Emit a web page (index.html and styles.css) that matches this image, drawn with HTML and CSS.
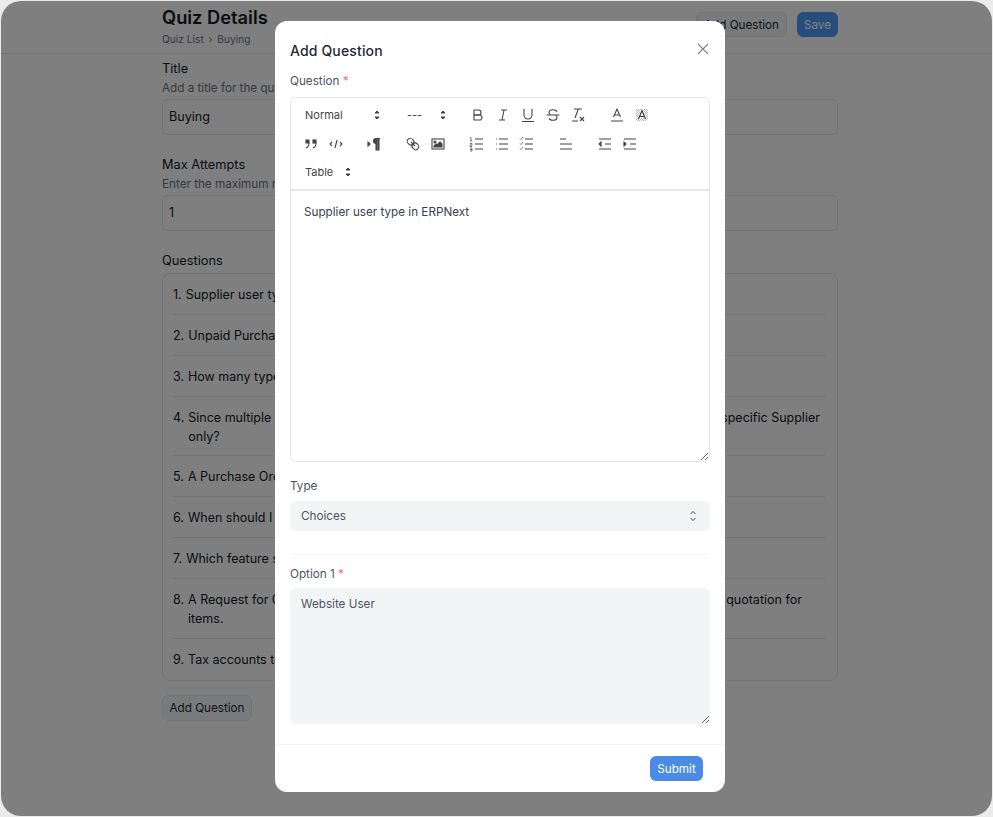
FILE: index.html
```html
<!DOCTYPE html>
<html lang="en">
<head>
    <meta charset="UTF-8">
    <meta name="viewport" content="width=device-width, initial-scale=1.0">
    <title>Quiz Details</title>
    <link rel="stylesheet" href="styles.css">
</head>
<body>

<div class="window">
    <header class="page-header">
        <div class="page-header-inner">
            <div>
                <h1 class="page-title">Quiz Details</h1>
                <div class="crumbs">Quiz List <span class="crumb-sep">›</span> Buying</div>
            </div>
            <div class="header-actions">
                <button class="btn">Add Question</button>
                <button class="btn btn-primary">Save</button>
            </div>
        </div>
    </header>

    <main class="page-body">
        <div class="field-title">Title</div>
        <div class="field-desc">Add a title for the quiz</div>
        <div class="page-input">Buying</div>

        <div class="field-title field-gap">Max Attempts</div>
        <div class="field-desc">Enter the maximum number of attempts allowed</div>
        <div class="page-input">1</div>

        <div class="field-title questions-title">Questions</div>
        <ol class="question-list">
            <li><span class="q-num">1.</span><span>Supplier user type in ERPNext</span></li>
            <li><span class="q-num">2.</span><span>Unpaid Purchase Invoices can be tracked from which report?</span></li>
            <li><span class="q-num">3.</span><span>How many types of Purchase Order status are available?</span></li>
            <li><span class="q-num">4.</span><span>Since multiple Suppliers can be linked to a singular Item, how can you restrict an Item to a specific Supplier only?</span></li>
            <li><span class="q-num">5.</span><span>A Purchase Order can be created from which documents?</span></li>
            <li><span class="q-num">6.</span><span>When should I use a Purchase Receipt for received items?</span></li>
            <li><span class="q-num">7.</span><span>Which feature should be used to compare supplier rates?</span></li>
            <li><span class="q-num">8.</span><span>A Request for Quotation can be sent to multiple Suppliers over email to receive their fairest quotation for items.</span></li>
            <li><span class="q-num">9.</span><span>Tax accounts to be added in which template?</span></li>
        </ol>
        <button class="btn add-bottom">Add Question</button>
    </main>

    <div class="overlay"></div>

    <div class="modal">
        <div class="modal-head">
            <h2 class="modal-title">Add Question</h2>
            <svg class="close-icon" width="12" height="12" viewBox="0 0 12 12"><path d="M1 1l10 10M11 1L1 11"/></svg>
        </div>

        <label class="label">Question <span class="req">*</span></label>
        <div class="editor">
            <div class="toolbar">
                <div class="tb-row">
                    <div class="picker picker-wide">Normal
                        <svg viewBox="0 0 18 18"><polygon points="7 11 9 13 11 11 7 11"/><polygon points="7 7 9 5 11 7 7 7"/></svg>
                    </div>
                    <div class="picker picker-mid">---
                        <svg viewBox="0 0 18 18"><polygon points="7 11 9 13 11 11 7 11"/><polygon points="7 7 9 5 11 7 7 7"/></svg>
                    </div>
                    <div class="tb-group">
                        <svg class="tb-icon" viewBox="0 0 18 18"><path d="M5,4H9.5A2.5,2.5,0,0,1,12,6.5v0A2.5,2.5,0,0,1,9.5,9H5V4Z"/><path d="M5,9h5.5A2.5,2.5,0,0,1,13,11.5v0A2.5,2.5,0,0,1,10.5,14H5V9Z"/></svg>
                        <svg class="tb-icon" viewBox="0 0 18 18"><path d="M7 4h6M5 14h6M8 14l2-10"/></svg>
                        <svg class="tb-icon" viewBox="0 0 18 18"><path d="M5,3V9a4,4,0,0,0,4,4h0a4,4,0,0,0,4-4V3"/><path d="M3 15.500h12"/></svg>
                        <svg class="tb-icon" viewBox="0 0 18 18"><path d="M2.500 9h13"/><path d="M13 5.700C12.500 4.400 10.900 3.700 9 3.700c-2.400 0-4 1.200-4 2.800 0 1 .5 1.700 1.400 2.200"/><path d="M5 12.300c.5 1.300 2.100 2 4 2 2.400 0 4-1.200 4-2.800 0-1-.5-1.700-1.400-2.200"/></svg>
                        <svg class="tb-icon" viewBox="0 0 18 18"><path d="M5 3h8M6 12l3.300-9M11 11l4 4M15 11l-4 4M3 15h6"/></svg>
                    </div>
                    <div class="tb-group">
                        <svg class="tb-icon" viewBox="0 0 18 18"><path d="M3 15h12M5.500 11L9 3l3.500 8M11.600 9H6.400"/></svg>
                        <svg class="tb-icon" viewBox="0 0 18 18"><g class="hatch"><path d="M3 4l1-1M3 6l3-3M3 8l5-5M3 10l7-7M3 12l9-9M3 14l11-11M4 15L15 4M6 15l9-9M8 15l7-7M10 15l5-5M12 15l3-3"/></g><path class="a-halo" d="M5.500 13L9 4.500 12.500 13M11.600 10.500H6.400"/><path class="a-mark" d="M5.500 13L9 4.500 12.500 13M11.600 10.500H6.400"/></svg>
                    </div>
                </div>
                <div class="tb-row">
                    <div class="tb-group tb-first">
                        <svg class="tb-icon" viewBox="0 0 18 18"><rect class="solid" height="3" width="3" x="4" y="5"/><rect class="solid" height="3" width="3" x="11" y="5"/><path d="M7,8c0,4-3,5-3,5"/><path d="M14,8c0,4-3,5-3,5"/></svg>
                        <svg class="tb-icon" viewBox="0 0 18 18"><path d="M5 7L3 9l2 2M13 7l2 2-2 2M10 5L8 13"/></svg>
                    </div>
                    <div class="tb-group">
                        <svg class="tb-icon" viewBox="0 0 18 18"><polygon class="solid" points="3 11 5 9 3 7 3 11"/><path class="solid no-line" d="M11,3a3,3,0,0,0,0,6h1V3H11Z"/><rect class="solid" height="11" width="1" x="11" y="4"/><rect class="solid" height="11" width="1" x="13" y="4"/><path d="M11 3.500h4"/></svg>
                    </div>
                    <div class="tb-group">
                        <svg class="tb-icon" viewBox="0 0 18 18"><path d="M7 7l4 4"/><path d="M8.900,4.577a3.476,3.476,0,0,1,.36,4.679A3.476,3.476,0,0,1,4.577,8.900C3.185,7.500,2.035,6.400,4.217,4.217S7.500,3.185,8.900,4.577Z"/><path d="M13.423,9.100a3.476,3.476,0,0,0-4.679-.36,3.476,3.476,0,0,0,.36,4.679c1.392,1.392,2.500,2.542,4.679.36S14.815,10.500,13.423,9.100Z"/></svg>
                        <svg class="tb-icon" viewBox="0 0 18 18"><rect height="10" width="12" x="3" y="4"/><circle class="solid" cx="6" cy="7" r="1"/><polygon class="solid" points="5 12 5 11 7 9 8 10 11 7 13 9 13 12 5 12"/></svg>
                    </div>
                    <div class="tb-group">
                        <svg class="tb-icon" viewBox="0 0 18 18"><path d="M7 4h8M7 9h8M7 14h8"/><path class="thin" d="M2 3l1-.5V6M2 6h2M2 8.500h2v1.500H2v1.500h2M2 13h2v3H2M2 14.500h2"/></svg>
                        <svg class="tb-icon" viewBox="0 0 18 18"><path d="M6 4h9M6 9h9M6 14h9"/><path d="M3 4h.8M3 9h.8M3 14h.8"/></svg>
                        <svg class="tb-icon" viewBox="0 0 18 18"><path d="M7 4h8M7 9h8M7 14h8"/><path class="thin" d="M2 3.500l1 1 2-2.500M2 8.500l1 1 2-2.500M2 13.500l1 1 2-2.500"/></svg>
                    </div>
                    <div class="tb-group tb-tight">
                        <svg class="tb-icon" viewBox="0 0 18 18"><path d="M3 4h6M3 9h12M3 14h12"/></svg>
                    </div>
                    <div class="tb-group">
                        <svg class="tb-icon" viewBox="0 0 18 18"><path d="M3 14h12M3 4h12M9 9h6"/><polygon class="solid" points="5 7 5 11 3 9 5 7"/></svg>
                        <svg class="tb-icon" viewBox="0 0 18 18"><path d="M3 14h12M3 4h12M9 9h6"/><polygon class="solid" points="3 7 3 11 5 9 3 7"/></svg>
                    </div>
                </div>
                <div class="tb-row">
                    <div class="picker picker-table">Table
                        <svg viewBox="0 0 18 18"><polygon points="7 11 9 13 11 11 7 11"/><polygon points="7 7 9 5 11 7 7 7"/></svg>
                    </div>
                </div>
            </div>
            <div class="editor-body">Supplier user type in ERPNext</div>
        </div>

        <label class="label type-label">Type</label>
        <div class="select">Choices
            <svg width="12" height="14" viewBox="0 0 12 14"><path d="M3.500 5L6 2.500 8.500 5M3.500 9L6 11.500 8.500 9"/></svg>
        </div>

        <hr class="divider">

        <label class="label">Option 1 <span class="req">*</span></label>
        <textarea class="textarea">Website User</textarea>

        <div class="modal-foot">
            <button class="btn-submit">Submit</button>
        </div>
    </div>
</div>

</body>
</html>
```

FILE: styles.css
```css
* {
    box-sizing: border-box;
}
body {
    margin: 0;
    background-color: #ebebeb;
    font-family: Inter, 'Noto Sans', sans-serif;
    color: #111827;
}
.window {
    position: relative;
    width: 991px;
    height: 815px;
    margin: 1px;
    background-color: #fff;
    border-radius: 20px;
    overflow: hidden;
}
.overlay {
    position: absolute;
    top: 0;
    left: 0;
    right: 0;
    bottom: 0;
    background-color: rgba(0, 0, 0, 0.5);
}

/* page behind the dialog */
.page-header {
    height: 53px;
    border-bottom: 1px solid #e5e7eb;
}
.page-header-inner {
    width: 676px;
    margin-left: 161px;
    display: flex;
    justify-content: space-between;
    align-items: flex-start;
}
.page-title {
    margin: 5px 0 0;
    font-size: 18.3px;
    line-height: 22px;
    font-weight: 600;
}
.crumbs {
    margin-top: 4px;
    font-size: 10.2px;
    line-height: 14px;
    color: #6b7280;
}
.crumb-sep {
    margin: 0 2px;
}
.header-actions {
    display: flex;
    gap: 10px;
    margin-top: 11px;
}
.btn {
    height: 25px;
    width: 91px;
    padding: 0;
    border: 1px solid #e5e7eb;
    border-radius: 6px;
    background-color: #f3f4f6;
    font-family: inherit;
    font-size: 11.7px;
    color: #1f2937;
}
.btn-primary {
    width: 41px;
    background-color: #4f9bf9;
    border-color: #4f9bf9;
    color: #fff;
}
.page-body {
    width: 676px;
    margin-left: 161px;
    padding-top: 7px;
}
.field-title {
    font-size: 12.8px;
    line-height: 16px;
    font-weight: 400;
}
.field-gap {
    margin-top: 22px;
}
.field-desc {
    margin-top: 3px;
    font-size: 11.7px;
    line-height: 16px;
    color: #6b7280;
}
.page-input {
    height: 36px;
    margin-top: 3px;
    padding: 0 6px;
    border: 1px solid #e5e7eb;
    border-radius: 6px;
    font-size: 12.6px;
    line-height: 33px;
}
.questions-title {
    margin-top: 22px;
}
.question-list {
    margin: 4px 0 0;
    height: 408px;
    padding: 0 12px 0 10px;
    border: 1px solid #e5e7eb;
    border-radius: 8px;
    font-size: 12.5px;
    line-height: 19px;
    list-style: none;
}
.question-list li {
    display: flex;
    padding: 11px 0 10px;
    border-bottom: 1px solid #e5e7eb;
}
.question-list li:nth-child(4) {
    padding-bottom: 9px;
}
.q-num {
    flex: none;
    margin-right: 4px;
}
.question-list li:last-child {
    border-bottom: none;
}
.add-bottom {
    display: block;
    width: 90px;
    height: 26px;
    margin-top: 14px;
}

/* dialog */
.modal {
    position: absolute;
    top: 20px;
    left: 274px;
    width: 450px;
    height: 771px;
    padding: 0 15px;
    background-color: #fff;
    border-radius: 12px;
}
.modal-head {
    display: flex;
    justify-content: space-between;
    align-items: flex-start;
    padding-top: 20px;
    height: 52px;
}
.modal-title {
    margin: 0;
    font-size: 14px;
    line-height: 20px;
    font-weight: 500;
    letter-spacing: 0.15px;
    color: #1f2937;
}
.close-icon {
    margin: 2px 1px 0 0;
    stroke: #7b8290;
    stroke-width: 1.1;
    fill: none;
}
.label {
    display: block;
    font-size: 11.7px;
    line-height: 16px;
    color: #4b5563;
}
.req {
    color: #f87171;
}
.editor {
    height: 365px;
    margin-top: 8px;
    border: 1px solid #e5e7eb;
    border-radius: 6px;
    display: flex;
    flex-direction: column;
}
.toolbar {
    height: 93px;
    padding: 3px 7px 0;
    border-bottom: 2px solid #e5e7eb;
}
.tb-row {
    display: flex;
    height: 28.5px;
    align-items: center;
    gap: 14px;
}
.tb-group {
    display: flex;
    align-items: center;
}
.tb-first {
    margin-right: -1px;
}
.tb-tight {
    margin-right: 0;
}
.tb-icon {
    width: 18px;
    height: 18px;
    margin: 0 3.5px;
    stroke: #444;
    stroke-width: 1.1;
    fill: none;
}
.tb-icon .solid {
    fill: #444;
}
.tb-icon .no-line {
    stroke: none;
}
.tb-icon .thin {
    stroke-width: 0.7;
}
.tb-icon .hatch {
    stroke: #888;
    stroke-width: 0.6;
}
.tb-icon .a-halo {
    stroke: #fff;
    stroke-width: 2.6;
}
.tb-icon .a-mark {
    stroke: #333;
}
.picker {
    display: flex;
    justify-content: space-between;
    align-items: center;
    height: 24px;
    padding-left: 7px;
    font-size: 11px;
    color: #444;
}
.picker svg {
    width: 18px;
    height: 18px;
    fill: #444;
    stroke: #444;
    stroke-width: 1;
}
.picker-wide {
    width: 88px;
}
.picker-mid {
    width: 52px;
    margin-right: -1px;
}
.picker-table {
    width: 59px;
}
.editor-body {
    flex: 1;
    padding: 12px 13px;
    font-size: 11.7px;
    line-height: 18px;
    color: #374151;
    overflow: auto;
    resize: vertical;
}
.type-label {
    margin-top: 16px;
}
.select {
    display: flex;
    justify-content: space-between;
    align-items: center;
    height: 30px;
    margin-top: 7px;
    padding: 0 11px;
    background-color: #f3f4f6;
    border-radius: 6px;
    font-size: 11.7px;
    color: #4b5563;
}
.select svg {
    fill: none;
    stroke: #374151;
    stroke-width: 1;
}
.divider {
    margin: 23px 0 11px;
    border: none;
    border-top: 1px solid #f3f4f6;
}
.textarea {
    display: block;
    width: 100%;
    height: 136px;
    margin-top: 6px;
    padding: 7px 11px;
    border: none;
    border-radius: 6px;
    background-color: #f3f4f6;
    font-family: inherit;
    font-size: 11.7px;
    line-height: 18px;
    color: #4b5563;
    outline: none;
}
.modal-foot {
    display: flex;
    justify-content: flex-end;
    margin: 20px -15px 0;
    padding: 11px 22px 0 0;
    border-top: 1px solid #f3f4f6;
}
.btn-submit {
    width: 53px;
    height: 25px;
    padding: 0;
    border: none;
    border-radius: 6px;
    background-color: #4a8be8;
    font-family: inherit;
    font-size: 11.7px;
    color: #fff;
}
```
